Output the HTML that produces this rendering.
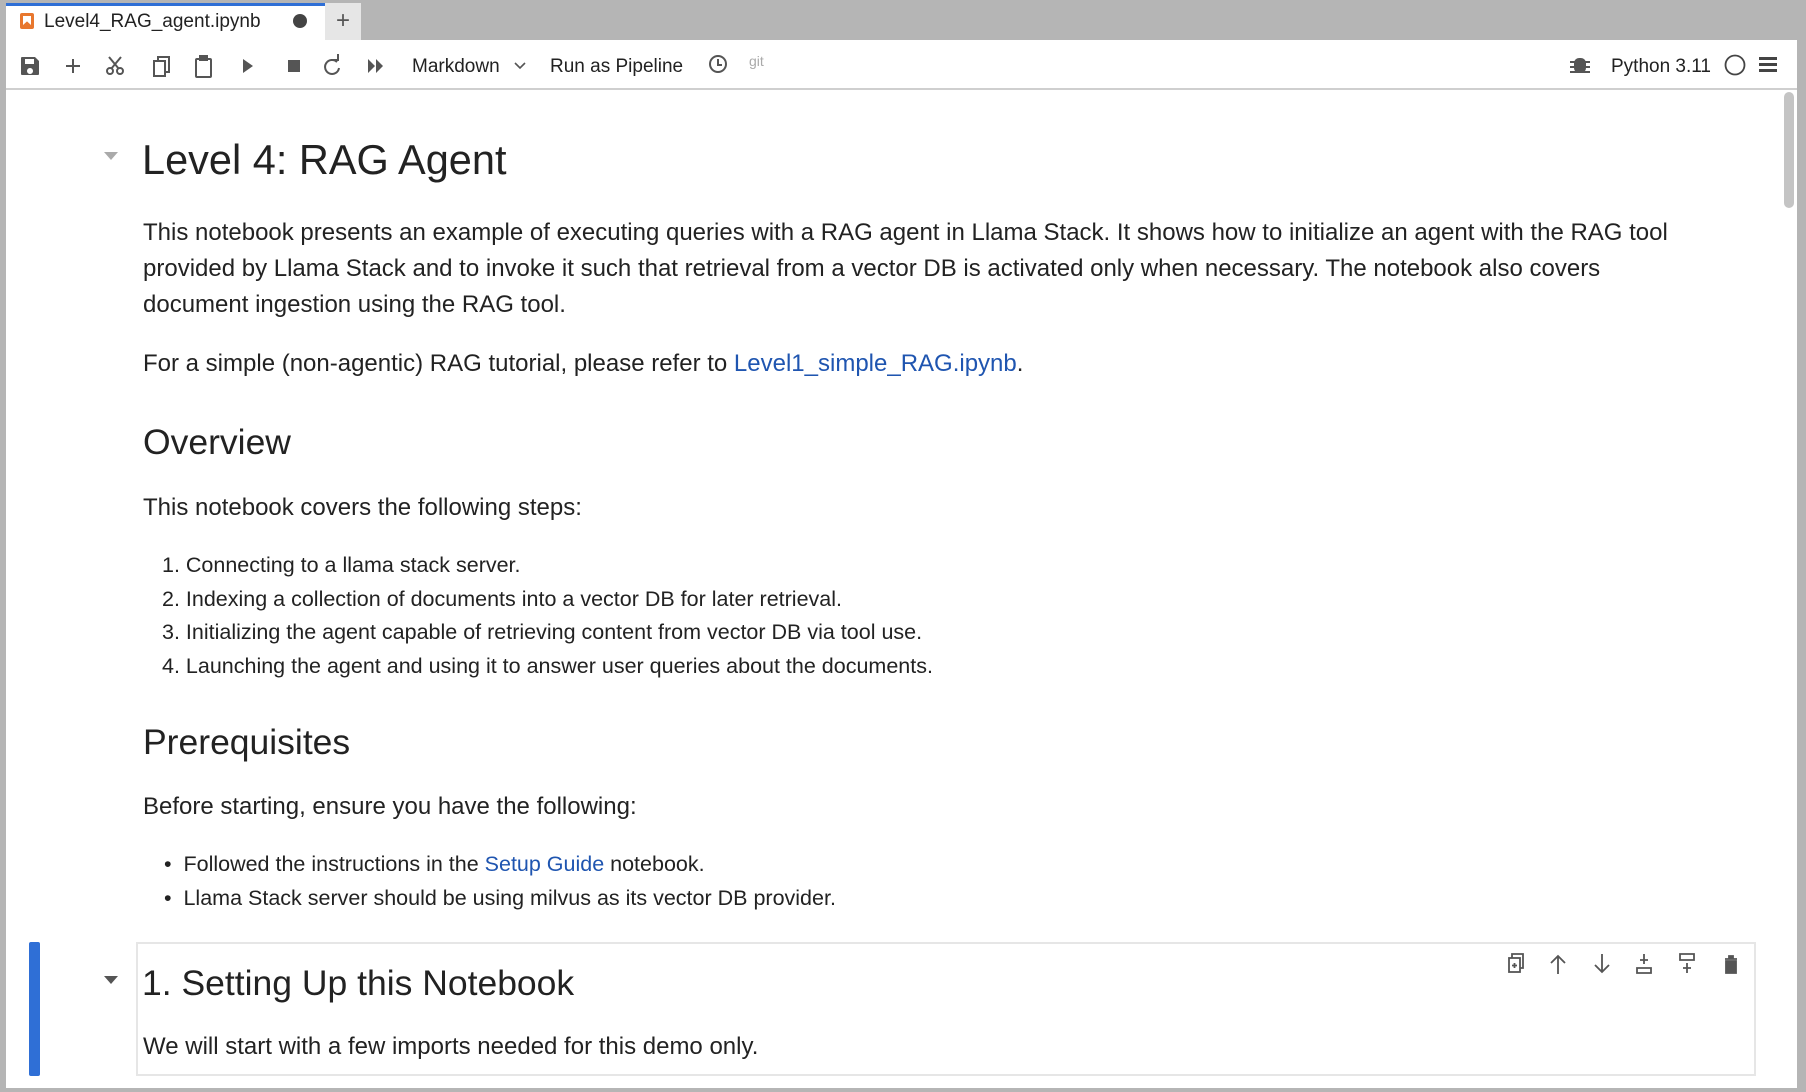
<!DOCTYPE html>
<html><head><meta charset="utf-8"><style>
*{margin:0;padding:0;box-sizing:border-box}
body{width:1806px;height:1092px;background:#b5b5b5;font-family:"Liberation Sans",sans-serif;color:#222;position:relative;overflow:hidden}
.abs{position:absolute;white-space:nowrap}
.main{position:absolute;left:6px;top:40px;width:1791px;height:1048px;background:#fff}
.p{font-size:24px;line-height:36px;left:143px}
.li{font-size:21.5px;line-height:30px}
h1,h2{font-weight:400}
a{color:#1f55b0;text-decoration:none}
.ic{position:absolute}
</style></head><body>
<!-- tab -->
<div class="abs" style="left:6px;top:3px;width:319px;height:37px;background:#fff;border-top:3px solid #2f6fd6"></div>
<div class="abs" style="left:20px;top:13px;width:14px;height:16px;background:#e8772e;border-radius:2px"></div>
<div class="abs" style="left:23px;top:16px;width:8px;height:9px;background:#fff;clip-path:polygon(0 0,100% 0,100% 100%,50% 60%,0 100%)"></div>
<div class="abs" style="left:44px;top:10px;font-size:19px;line-height:24px;color:#222">Level4_RAG_agent.ipynb</div>
<div class="abs" style="left:293px;top:14px;width:14px;height:14px;border-radius:50%;background:#444"></div>
<div class="abs" style="left:325px;top:3px;width:36px;height:37px;background:#e6e6e6;font-size:24px;line-height:36px;text-align:center;color:#555">+</div>
<div class="main"></div>
<!-- toolbar -->
<div class="abs" style="left:6px;top:88px;width:1791px;height:2px;background:#cfcfcf"></div>
<svg class="ic" style="left:0;top:40px" width="900" height="50">
 <g fill="#555">
  <path d="M22 17h13l4 4v13a1 1 0 0 1-1 1H22a1 1 0 0 1-1-1V18a1 1 0 0 1 1-1zm3 2v5h9v-5zm5 9a3 3 0 1 0 .01 0z"/>
  <path d="M72 19h2v6h6v2h-6v6h-2v-6h-6v-2h6z"/>
  <rect x="288" y="20" width="12" height="12"/>
  <path d="M243 19l10 7-10 7z"/>
  <path d="M368 19l7 7-7 7zM376 19l7 7-7 7z"/>
 </g>
 <g fill="none" stroke="#555" stroke-width="2">
  <circle cx="110" cy="31" r="3"/><circle cx="120" cy="31" r="3"/><path d="M111 29l10-12M119 29l-10-12"/>
  <rect x="154" y="21" width="11" height="15"/><path d="M158 21v-4h11v15h-4"/>
  <rect x="196" y="19" width="15" height="18" rx="1"/><rect x="200" y="16" width="7" height="4" fill="#555"/>
  <path d="M337 22a7 7 0 1 0 2 6"/><path d="M332 20h6v-6" />
  <path d="M515 23l5 5 5-5" stroke-width="1.6"/>
  <circle cx="718" cy="24" r="8"/><path d="M718 19v6h4"/>
 </g>
 <text x="412" y="32" font-size="19" fill="#222" font-family="Liberation Sans">Markdown</text>
 <text x="550" y="32" font-size="19" fill="#222" font-family="Liberation Sans">Run as Pipeline</text>
 <text x="749" y="26" font-size="14" fill="#aaa" font-family="Liberation Sans">git</text>
</svg>
<svg class="ic" style="left:1560px;top:40px" width="240" height="50">
 <g fill="#555"><rect x="14" y="18" width="12" height="15" rx="5"/><path d="M10 21h20v2H10zM10 26h20v2H10zM10 31h20v2H10z"/></g>
 <text x="51" y="32" font-size="19" fill="#222" font-family="Liberation Sans">Python 3.11</text>
 <circle cx="175" cy="25" r="9.5" fill="none" stroke="#444" stroke-width="1.8"/>
 <g fill="#444"><rect x="199" y="17" width="18" height="3"/><rect x="199" y="23" width="18" height="3"/><rect x="199" y="29" width="18" height="3"/></g>
</svg>
<!-- scrollbar -->
<div class="abs" style="left:1784px;top:92px;width:10px;height:116px;background:#c4c4c4;border-radius:5px"></div>
<!-- content -->
<div class="abs" style="left:104px;top:152px;width:0;height:0;border-left:7px solid transparent;border-right:7px solid transparent;border-top:8px solid #aaa"></div>
<h1 class="abs" style="left:142px;top:135px;font-size:41.5px;line-height:50px">Level 4: RAG Agent</h1>
<div class="abs p" style="top:215px">This notebook presents an example of executing queries with a RAG agent in Llama Stack. It shows how to initialize an agent with the RAG tool</div>
<div class="abs p" style="top:251px">provided by Llama Stack and to invoke it such that retrieval from a vector DB is activated only when necessary. The notebook also covers</div>
<div class="abs p" style="top:287px">document ingestion using the RAG tool.</div>
<div class="abs p" style="top:346px">For a simple (non-agentic) RAG tutorial, please refer to <a>Level1_simple_RAG.ipynb</a>.</div>
<h2 class="abs" style="left:143px;top:422px;font-size:35.5px;line-height:40px">Overview</h2>
<div class="abs p" style="top:490px">This notebook covers the following steps:</div>
<div class="abs li" style="left:162px;top:550px">1. Connecting to a llama stack server.</div>
<div class="abs li" style="left:162px;top:584px">2. Indexing a collection of documents into a vector DB for later retrieval.</div>
<div class="abs li" style="left:162px;top:617px">3. Initializing the agent capable of retrieving content from vector DB via tool use.</div>
<div class="abs li" style="left:162px;top:651px">4. Launching the agent and using it to answer user queries about the documents.</div>
<h2 class="abs" style="left:143px;top:722px;font-size:35.5px;line-height:40px">Prerequisites</h2>
<div class="abs p" style="top:789px">Before starting, ensure you have the following:</div>
<div class="abs li" style="left:164px;top:849px">•&nbsp;&nbsp;Followed the instructions in the <a>Setup Guide</a> notebook.</div>
<div class="abs li" style="left:164px;top:883px">•&nbsp;&nbsp;Llama Stack server should be using milvus as its vector DB provider.</div>
<!-- active cell -->
<div class="abs" style="left:29px;top:942px;width:11px;height:134px;background:#2f6fd6;border-radius:2px"></div>
<div class="abs" style="left:136px;top:942px;width:1620px;height:134px;border:2px solid #e6e6e6"></div>
<div class="abs" style="left:104px;top:976px;width:0;height:0;border-left:7px solid transparent;border-right:7px solid transparent;border-top:8px solid #555"></div>
<h1 class="abs" style="left:142px;top:958px;font-size:35.5px;line-height:50px">1. Setting Up this Notebook</h1>
<div class="abs p" style="top:1029px">We will start with a few imports needed for this demo only.</div>
<svg class="ic" style="left:1500px;top:950px" width="250" height="30" fill="none" stroke="#555" stroke-width="1.8">
 <rect x="9" y="8" width="11" height="14"/><path d="M12 8V4h11v14h-3"/><path d="M14.5 13v5M12 15.5h5"/>
 <path d="M58 24V6M51 13l7-7 7 7"/>
 <path d="M102 4v18M95 15l7 7 7-7"/>
 <path d="M137 18h14v5h-14zM144 4v10M140 10h8"/>
 <path d="M180 4h14v6h-14zM187 13v10M183 18h8"/>
 <path d="M225 9h12M229 9V6h4v3M226 11h10v12h-10z" fill="#555"/>
</svg>
</body></html>
